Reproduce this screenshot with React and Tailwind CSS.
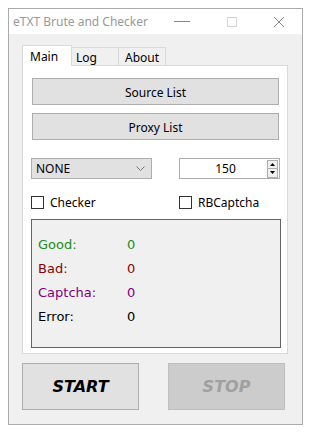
const ui = { fontFamily: '"Noto Sans", "Open Sans", sans-serif' };
const stat = { fontFamily: '"DejaVu Sans", Verdana, sans-serif' };

const Checkbox = ({ label }) => (
  <div className="flex items-center gap-[6px]">
    <div className="w-[13px] h-[13px] border border-[#333] bg-white" />
    <span className="text-[12px] text-black leading-none pt-[2px]">{label}</span>
  </div>
);

const StatRow = ({ label, color }) => (
  <div className="flex h-[24px] items-center text-[13px]" style={{ ...stat, color }}>
    <span className="w-[89px]">{label}</span>
    <span>0</span>
  </div>
);

export default function App() {
  return (
    <div className="w-[311px] h-[435px] bg-white pt-2 pl-2" style={ui}>
      <div className="w-[295px] h-[417px] border border-[#aaaaaa] flex flex-col">
        {/* title bar */}
        <div className="h-[25px] bg-white flex items-center shrink-0">
          <span className="ml-[4px] text-[12px] text-[#999999]">eTXT Brute and Checker</span>
          <div className="ml-auto flex items-center">
            <div className="w-[16px] h-px bg-[#888] mr-[37px]" />
            <div className="w-[10px] h-[10px] border border-[#d4d4d4] mr-[36px]" />
            <svg width="12" height="12" viewBox="0 0 12 12" className="mr-[17px]">
              <path d="M1 1L11 11M11 1L1 11" stroke="#888" strokeWidth="1" />
            </svg>
          </div>
        </div>

        {/* client */}
        <div className="flex-1 bg-[#f0f0f0] pl-[13px] pt-[12px]">
          {/* tabs */}
          <div className="flex items-end h-[20px] relative z-10 -mb-px">
            <div className="h-[21px] w-[50px] bg-white border border-[#d9d9d9] border-b-0 text-[12px] pl-[7px] pt-[2px]">Main</div>
            <div className="h-[18px] w-[47px] bg-[#f0f0f0] border border-[#d9d9d9] border-l-0 border-b-0 text-[12px] pl-[4px] pt-[1px] self-end mb-px">Log</div>
            <div className="h-[18px] w-[47px] bg-[#f0f0f0] border border-[#d9d9d9] border-l-0 border-b-0 text-[12px] pl-[6px] pt-[1px] self-end mb-px">About</div>
          </div>

          {/* panel */}
          <div className="w-[266px] h-[289px] bg-white border border-[#d9d9d9] pl-[9px] pt-[12px]">
            <div className="w-[247px] h-[27px] bg-[#e1e1e1] border border-[#adadad] flex items-center justify-center text-[12px] pt-[2px]">Source List</div>
            <div className="w-[247px] h-[27px] bg-[#e1e1e1] border border-[#adadad] flex items-center justify-center text-[12px] mt-[8px] pt-[2px]">Proxy List</div>

            <div className="flex mt-[18px] -ml-px">
              <div className="w-[121px] h-[21px] bg-[#e1e1e1] border border-[#adadad] flex items-center pl-[4px] pr-[6px]">
                <span className="text-[12px] pt-px">NONE</span>
                <svg width="9" height="6" viewBox="0 0 9 6" className="ml-auto">
                  <path d="M0.5 0.5L4.5 4.5L8.5 0.5" stroke="#777" fill="none" />
                </svg>
              </div>
              <div className="w-[101px] h-[21px] bg-white border border-[#adadad] ml-[27px] flex items-center">
                <span className="flex-1 text-center text-[12px] pl-[4px]">150</span>
                <div className="w-[11px] h-[18px] mr-px flex flex-col border border-[#adadad]">
                  <div className="flex-1 bg-[#f0f0f0] flex items-center justify-center border-b border-[#adadad]">
                    <svg width="5" height="3" viewBox="0 0 5 3"><path d="M2.5 0L5 3H0Z" fill="#000" /></svg>
                  </div>
                  <div className="flex-1 bg-[#f0f0f0] flex items-center justify-center">
                    <svg width="5" height="3" viewBox="0 0 5 3"><path d="M0 0H5L2.5 3Z" fill="#000" /></svg>
                  </div>
                </div>
              </div>
            </div>

            <div className="flex mt-[16px] -ml-px">
              <div className="w-[148px]"><Checkbox label="Checker" /></div>
              <Checkbox label="RBCaptcha" />
            </div>

            <div className="w-[250px] h-[129px] bg-[#f0f0f0] border border-[#646464] mt-[10px] -ml-px pl-[6px] pt-[13px]">
              <StatRow label="Good:" color="#228b22" />
              <StatRow label="Bad:" color="#8b0000" />
              <StatRow label="Captcha:" color="#800080" />
              <StatRow label="Error:" color="#000000" />
            </div>
          </div>

          {/* start / stop */}
          <div className="flex mt-[9px]" style={stat}>
            <div className="w-[117px] h-[47px] bg-[#e1e1e1] border border-[#adadad] flex items-center justify-center text-[16px] font-bold italic text-black">START</div>
            <div className="w-[117px] h-[47px] bg-[#cccccc] border border-[#bfbfbf] flex items-center justify-center text-[16px] font-bold italic text-[#a0a0a0] ml-[29px]">STOP</div>
          </div>
        </div>
      </div>
    </div>
  );
}
